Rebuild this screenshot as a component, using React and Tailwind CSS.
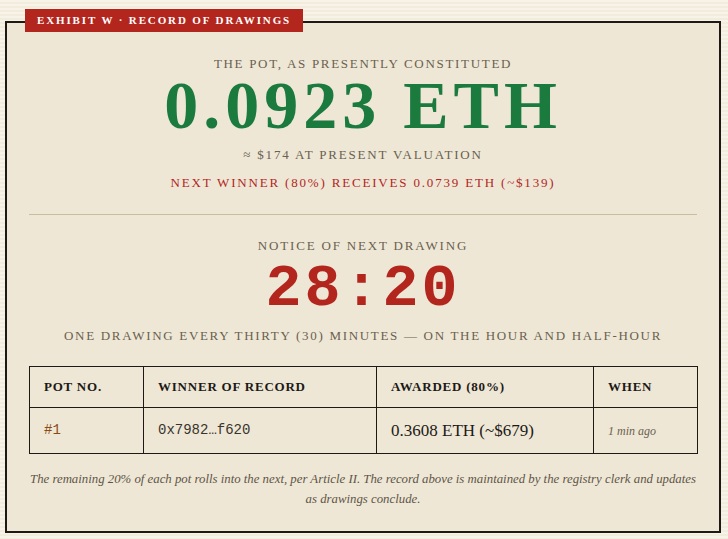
import React from 'react';

const SERIF = { fontFamily: '"Liberation Serif", "DejaVu Serif", serif' };
const MONO = { fontFamily: '"Liberation Mono", "DejaVu Sans Mono", monospace' };

const RECORDS = [
  { pot: '#1', winner: '0x7982…f620', awarded: '0.3608 ETH (~$679)', when: '1 min ago' },
];

function Label({ children, className = '' }) {
  return (
    <div className={`text-center text-[13px] leading-[16px] uppercase text-[#6b5f4f] ${className}`}>
      {children}
    </div>
  );
}

export default function App() {
  return (
    <div
      className="min-h-screen pt-[21px] pl-[5px] pb-[7px] bg-[#f6f1e4] bg-[repeating-linear-gradient(180deg,#f7f3e8_0px,#f7f3e8_2px,#f2ecdd_2px,#f2ecdd_4px)]"
      style={SERIF}
    >
      <section className="relative w-[716px] border-2 border-[#1d1a16] bg-[#eee7d6] px-[22px] pt-[33px] pb-[22px]">
        <div className="absolute -top-[14px] left-[18px] h-[23px] flex items-center px-[12px] bg-[#b3261e] text-white text-[11px] font-bold tracking-[0.17em] uppercase">
          Exhibit W · Record of Drawings
        </div>

        {/* pot summary */}
        <Label className="tracking-[0.13em]">The pot, as presently constituted</Label>
        <div className="mt-[1px] text-center text-[68px] leading-[64px] font-bold tracking-[5px] text-[#1b7a3d]">
          0.0923 ETH
        </div>
        <Label className="mt-[10px] tracking-[0.14em]">≈ $174 at present valuation</Label>
        <div className="mt-[12px] text-center text-[13px] leading-[16px] uppercase tracking-[0.14em] text-[#b3261e]">
          Next winner (80%) receives 0.0739 ETH (~$139)
        </div>

        <div className="mt-[23px] h-px bg-[#c9bd9e]" />

        {/* countdown */}
        <Label className="mt-[23px] tracking-[0.14em]">Notice of next drawing</Label>
        <div
          className="mt-[5px] text-center text-[60px] leading-none font-bold tracking-[3px] text-[#b3261e]"
          style={MONO}
        >
          28:20
        </div>
        <Label className="mt-[9px] tracking-[0.13em] text-[#5f5547]">
          One drawing every thirty (30) minutes — on the hour and half-hour
        </Label>

        {/* record of drawings */}
        <table className="mt-[22px] w-full table-fixed border-collapse border border-[#1d1a16] text-[#1d1a16]">
          <colgroup>
            <col className="w-[114px]" />
            <col className="w-[233px]" />
            <col className="w-[217px]" />
            <col className="w-[104px]" />
          </colgroup>
          <thead>
            <tr className="h-[41px]">
              {['Pot No.', 'Winner of Record', 'Awarded (80%)', 'When'].map((h) => (
                <th
                  key={h}
                  className="border border-[#1d1a16] px-[14px] text-left text-[13px] font-bold uppercase tracking-[0.06em]"
                >
                  {h}
                </th>
              ))}
            </tr>
          </thead>
          <tbody>
            {RECORDS.map((r) => (
              <tr key={r.pot} className="h-[46px]">
                <td className="border border-[#1d1a16] px-[14px] text-[14px] text-[#8a4a12]" style={MONO}>
                  {r.pot}
                </td>
                <td className="border border-[#1d1a16] px-[14px] text-[14px] text-[#3a342c]" style={MONO}>
                  {r.winner}
                </td>
                <td className="border border-[#1d1a16] px-[14px] text-[17px] text-[#1d1a16]">{r.awarded}</td>
                <td className="border border-[#1d1a16] px-[14px] text-[12px] italic text-[#6b5f4f]">{r.when}</td>
              </tr>
            ))}
          </tbody>
        </table>

        <p className="mt-[15px] text-center text-[12.8px] leading-[20px] italic text-[#5f5547]">
          The remaining 20% of each pot rolls into the next, per Article II. The record above is maintained by the
          registry clerk and updates
          <br />
          as drawings conclude.
        </p>
      </section>
    </div>
  );
}
